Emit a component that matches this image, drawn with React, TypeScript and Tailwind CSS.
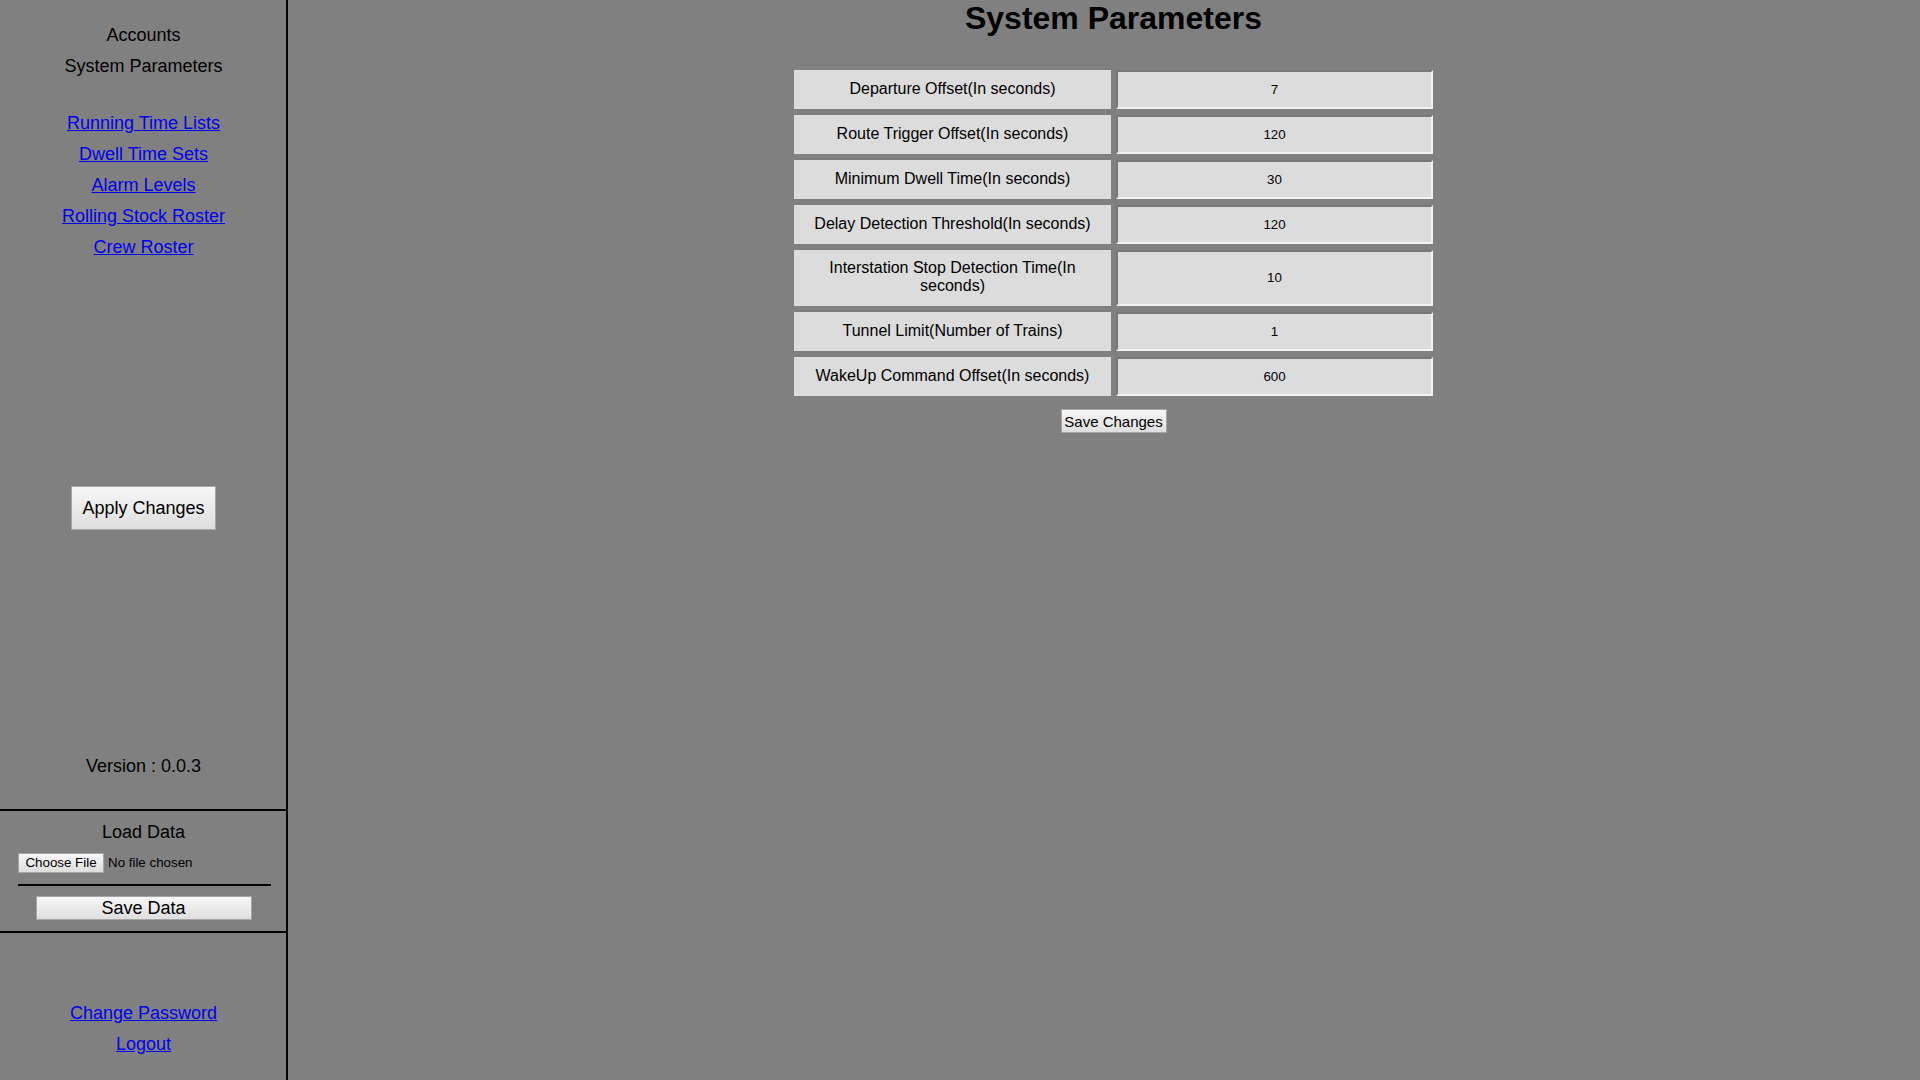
import { useState } from "react";

const params: { label: string; value: string }[] = [
  { label: "Departure Offset(In seconds)", value: "7" },
  { label: "Route Trigger Offset(In seconds)", value: "120" },
  { label: "Minimum Dwell Time(In seconds)", value: "30" },
  { label: "Delay Detection Threshold(In seconds)", value: "120" },
  { label: "Interstation Stop Detection Time(In seconds)", value: "10" },
  { label: "Tunnel Limit(Number of Trains)", value: "1" },
  { label: "WakeUp Command Offset(In seconds)", value: "600" },
];

const links = [
  "Running Time Lists",
  "Dwell Time Sets",
  "Alarm Levels",
  "Rolling Stock Roster",
  "Crew Roster",
];

const btn =
  "border border-[#a6a6a6] bg-gradient-to-b from-[#f7f7f7] to-[#dedede] text-black";

function Sidebar() {
  return (
    <aside className="flex h-screen w-[288px] shrink-0 flex-col border-r-2 border-black pl-[1px] text-center text-[18px] leading-[31px] text-black">
      <div className="pt-[20px]">
        <div>Accounts</div>
        <div>System Parameters</div>
      </div>

      <nav className="mt-[26px] flex flex-col">
        {links.map((l) => (
          <a key={l} href="#" className="text-[#0000ee] underline">
            {l}
          </a>
        ))}
      </nav>

      <div className="mt-[223px] flex justify-center">
        <button type="button" className={`${btn} h-[44px] w-[145px] text-[18px]`}>
          Apply Changes
        </button>
      </div>

      <div className="mt-[221px]">Version : 0.0.3</div>

      <div className="mt-[27px] -ml-[1px] border-y-2 border-black pb-[11px] pl-[1px] pt-[6px]">
        <div>Load Data</div>
        <div className="ml-[17px] mt-[5px] w-[253px]">
          <div className="flex items-center gap-[4px] text-left text-[13.33px] leading-none">
            <button type="button" className={`${btn} h-[20px] w-[86px] text-[13.33px]`}>
              Choose File
            </button>
            <span>No file chosen</span>
          </div>
          <div className="mt-[11px] h-[2px] bg-black" />
        </div>
        <div className="mt-[10px] flex justify-center">
          <button type="button" className={`${btn} h-[24px] w-[216px] text-[18px] leading-none`}>
            Save Data
          </button>
        </div>
      </div>

      <div className="mt-[65px] flex flex-col">
        <a href="#" className="text-[#0000ee] underline">
          Change Password
        </a>
        <a href="#" className="text-[#0000ee] underline">
          Logout
        </a>
      </div>
    </aside>
  );
}

export default function App() {
  const [values, setValues] = useState(params.map((p) => p.value));

  return (
    <div className="flex h-screen w-full overflow-hidden bg-[#808080] font-['Liberation_Sans',Arial,sans-serif]">
      <Sidebar />

      <main className="flex flex-1 flex-col items-center pl-[19px]">
        <h1 className="text-[32px] font-bold leading-[37px] text-black">System Parameters</h1>

        <div className="mt-[33px] grid grid-cols-[317px_317px] gap-x-[5px] gap-y-[6px]">
          {params.map((p, i) => (
            <div key={p.label} className="contents">
              <div className="flex min-h-[39px] items-center justify-center bg-[#dcdcdc] px-[10px] pb-[11px] pt-[9px] text-center text-[16px] leading-[18px] text-black">
                {p.label}
              </div>
              <input
                value={values[i]}
                onChange={(e) =>
                  setValues((v) => v.map((x, j) => (j === i ? e.target.value : x)))
                }
                className="min-h-[39px] border-2 border-b-[#f2f2f2] border-l-[#777777] border-r-[#f2f2f2] border-t-[#777777] bg-[#dcdcdc] text-center text-[13.33px] text-black outline-none"
              />
            </div>
          ))}
        </div>

        <button type="button" className={`${btn} mt-[13px] h-[24px] w-[106px] text-[15px] leading-none`}>
          Save Changes
        </button>
      </main>
    </div>
  );
}
